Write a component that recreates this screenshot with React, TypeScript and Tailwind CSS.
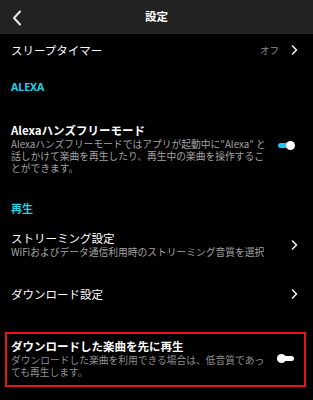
import React from "react";

const font = { fontFamily: '"Noto Sans CJK JP", "Noto Sans", sans-serif' };

function Chevron() {
  return (
    <svg width="7" height="10" viewBox="0 0 7 10" className="shrink-0">
      <path d="M1.5 1 L5.5 5 L1.5 9" fill="none" stroke="#f2f2f2" strokeWidth="1.6" strokeLinecap="round" strokeLinejoin="round" />
    </svg>
  );
}

function Toggle({ on }: { on: boolean }) {
  return (
    <div className="relative w-[17px] h-[9px] shrink-0">
      {on ? (
        <>
          <div className="absolute left-0 top-[2px] h-[5px] w-[13px] rounded-full bg-[#1cc6ee]" />
          <div className="absolute right-0 top-0 h-[9px] w-[9px] rounded-full bg-white" />
        </>
      ) : (
        <>
          <div className="absolute right-0 top-[2px] h-[5px] w-[14px] rounded-full bg-white" />
          <div className="absolute left-0 top-0 h-[9px] w-[9px] rounded-full bg-white" />
        </>
      )}
    </div>
  );
}

export default function App() {
  return (
    <div className="w-[313px] h-[400px] bg-black text-white overflow-hidden" style={font}>
      {/* Header */}
      <div className="relative h-[34px] bg-[#222222] flex items-center justify-center">
        <svg width="10" height="16" viewBox="0 0 10 16" className="absolute left-[12px] top-[10px]">
          <path d="M8 1.5 L2 8 L8 14.5" fill="none" stroke="#e8e8e8" strokeWidth="2" strokeLinecap="round" strokeLinejoin="round" />
        </svg>
        <span className="text-[11.5px] font-bold leading-none">設定</span>
      </div>

      {/* Sleep timer */}
      <div className="h-[32px] flex items-center pl-[11px] pr-[15px]">
        <span className="flex-1 text-[11.5px] leading-[15px]">スリープタイマー</span>
        <span className="text-[9.5px] text-[#8c8c8c] mr-[12px]">オフ</span>
        <Chevron />
      </div>

      {/* ALEXA section */}
      <div className="h-[42px] pt-[15px] pl-[11px]">
        <div className="text-[10.5px] font-bold leading-[12px] text-[#25cfe2]" style={{ fontFamily: '"Noto Sans", sans-serif' }}>ALEXA</div>
      </div>

      <div className="h-[82px] pt-[15px] pl-[11px] pr-[18px] flex items-start">
        <div className="flex-1">
          <div className="text-[11.5px] font-bold leading-[15px]">Alexaハンズフリーモード</div>
          <div className="text-[9.75px] leading-[12px] text-[#a3a3a3] whitespace-nowrap">
            Alexaハンズフリーモードではアプリが起動中に"Alexa" と<br />
            話しかけて楽曲を再生したり、再生中の楽曲を操作するこ<br />
            とができます。
          </div>
        </div>
        <div className="mt-[18px]">
          <Toggle on />
        </div>
      </div>

      {/* 再生 section */}
      <div className="h-[32px] pt-[12px] pl-[11px]">
        <div className="text-[11px] font-bold leading-[12px] text-[#25cfe2]">再生</div>
      </div>

      <div className="h-[48px] pt-[9px] pl-[11px] pr-[15px] flex items-center">
        <div className="flex-1 self-start">
          <div className="text-[11.5px] leading-[15px]">ストリーミング設定</div>
          <div className="text-[9.75px] leading-[12px] text-[#a3a3a3] whitespace-nowrap">WiFiおよびデータ通信利用時のストリーミング音質を選択</div>
        </div>
        <div className="mb-[12px]">
          <Chevron />
        </div>
      </div>

      <div className="h-[48px] flex items-center pl-[11px] pr-[15px]">
        <span className="flex-1 text-[11.5px] leading-[15px]">ダウンロード設定</span>
        <Chevron />
      </div>

      {/* Highlighted row */}
      <div className="mt-[14px] ml-[5px] mr-[7px] border-2 border-[#e3141c] pt-[5px] pb-[7px] pl-[4px] pr-[10px] flex items-center">
        <div className="flex-1">
          <div className="text-[11.5px] font-bold leading-[15px]">ダウンロードした楽曲を先に再生</div>
          <div className="text-[9.75px] leading-[12px] text-[#8f8f8f] whitespace-nowrap">
            ダウンロードした楽曲を利用できる場合は、低音質であっ<br />
            ても再生します。
          </div>
        </div>
        <Toggle on={false} />
      </div>
    </div>
  );
}
